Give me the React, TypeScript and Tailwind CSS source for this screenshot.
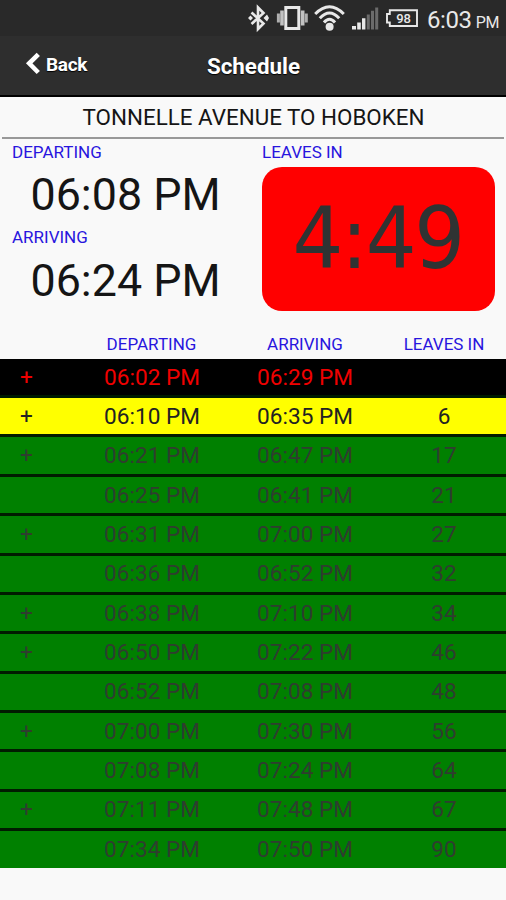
import { clsx } from "clsx";

type Train = {
  transfer: boolean;
  departing: string;
  arriving: string;
  leavesIn: string;
};

const trains: Train[] = [
  { transfer: true, departing: "06:02 PM", arriving: "06:29 PM", leavesIn: "" },
  { transfer: true, departing: "06:10 PM", arriving: "06:35 PM", leavesIn: "6" },
  { transfer: true, departing: "06:21 PM", arriving: "06:47 PM", leavesIn: "17" },
  { transfer: false, departing: "06:25 PM", arriving: "06:41 PM", leavesIn: "21" },
  { transfer: true, departing: "06:31 PM", arriving: "07:00 PM", leavesIn: "27" },
  { transfer: false, departing: "06:36 PM", arriving: "06:52 PM", leavesIn: "32" },
  { transfer: true, departing: "06:38 PM", arriving: "07:10 PM", leavesIn: "34" },
  { transfer: true, departing: "06:50 PM", arriving: "07:22 PM", leavesIn: "46" },
  { transfer: false, departing: "06:52 PM", arriving: "07:08 PM", leavesIn: "48" },
  { transfer: true, departing: "07:00 PM", arriving: "07:30 PM", leavesIn: "56" },
  { transfer: false, departing: "07:08 PM", arriving: "07:24 PM", leavesIn: "64" },
  { transfer: true, departing: "07:11 PM", arriving: "07:48 PM", leavesIn: "67" },
  { transfer: false, departing: "07:34 PM", arriving: "07:50 PM", leavesIn: "90" },
];

// missed = black, next one = yellow, the rest = green
const rowColor = (index: number) => {
  if (index === 0) return "bg-black text-[#f00000]";
  if (index === 1) return "bg-[#ffff00] text-[#222]";
  return "bg-[#008000] text-[#2f3d2f]";
};

const StatusBar = () => {
  return (
    <div className="flex h-9 items-center bg-[#292929] pl-[247px] text-[#e8e8e8]">
      {/* bluetooth */}
      <svg className="h-9 w-6 shrink-0" viewBox="0 0 24 36" fill="none" stroke="currentColor" strokeWidth="2.6">
        <path d="M4.5 12.5 L16.5 23.5 L11 29 V7.5 L16.5 13 L4.5 24" />
        <path d="M1 18 L3.5 15.5 L6 18 L3.5 20.5Z M16.5 18 L20 14.5 L22 18 L20 21.5Z" fill="currentColor" stroke="none" />
      </svg>
      {/* vibrate */}
      <svg className="ml-[5px] h-9 w-9 shrink-0" viewBox="0 0 36 36" fill="none" stroke="currentColor">
        <rect x="9.8" y="7.5" width="13" height="21" strokeWidth="3" />
        <path d="M6 10.5 V25.5 M26.7 10.5 V25.5" strokeWidth="3.6" opacity="0.8" />
        <path d="M2.4 13.5 V22.5 M30.3 13.5 V22.5" strokeWidth="3" opacity="0.7" />
      </svg>
      {/* wifi */}
      <svg className="h-9 w-9 shrink-0" viewBox="0 0 36 36" fill="none" stroke="currentColor" strokeWidth="3">
        <path d="M3.2 14 Q17.5 -0.5 31.8 14" />
        <path d="M7.8 18.2 Q17.5 7.8 27.2 18.2" />
        <path d="M12 22.5 Q17.5 16 23 22.5" />
        <circle cx="17.6" cy="26.7" r="4" fill="currentColor" stroke="none" />
      </svg>
      {/* signal */}
      <svg className="ml-[3px] h-9 w-[30px] shrink-0" viewBox="0 0 30 36" fill="currentColor">
        <path d="M1 26h4v3.5H1z M6.2 22.5h3.6v7H6.2z M11 18.3h3.4v11.2H11z" />
        <path d="M15.8 14.5h3v15h-3z M20 10.8h3v18.7h-3z M24.2 7.5h3v22h-3z" opacity="0.35" />
      </svg>
      <svg className="ml-[4px] h-9 w-9 shrink-0" viewBox="0 0 36 36" fill="none" stroke="currentColor">
        <path d="M4.8 10.2 H32 V26 H4.8 V22.5 H2 V14 H4.8Z" strokeWidth="1.9" />
        <text x="18.6" y="22.8" textAnchor="middle" fill="currentColor" stroke="none" className="font-[Roboto] text-[13px] font-medium">
          98
        </text>
      </svg>
      <span className="ml-[6px] mt-[6px] flex items-baseline whitespace-nowrap text-[24px] leading-9 tracking-[-0.4px]">
        6:03<span className="ml-[4px] text-[16px]">PM</span>
      </span>
    </div>
  );
};

const Header = () => {
  return (
    <header className="grid h-[61px] grid-cols-[1fr_auto_1fr] items-center border-b-2 border-black bg-[#2e2e2e] font-bold text-white [text-shadow:0_1px_1px_#000]">
      <div className="flex items-center gap-[5px] pb-[1px] pl-[25px] text-[19px] tracking-[-0.3px]">
        <svg className="mb-[3px] h-[23px] w-4" viewBox="0 0 16 23" fill="none" stroke="currentColor" strokeWidth="4.6">
          <path d="M13.3 2.3 L4.2 11.3 L13.3 20.5" />
        </svg>
        Back
      </div>
      <h1 className="pt-[3px] pl-px text-[22.4px]">Schedule</h1>
      <div />
    </header>
  );
};

const NextTrain = () => {
  return (
    <section className="flex h-[191px] pl-3">
      <div className="w-[250px]">
        <div className="h-[27px] text-[17px] leading-[27px] text-[#2815de]">DEPARTING</div>
        <div className="h-[58px] pl-[18.5px] text-[44.8px] leading-[58px]">06:08 PM</div>
        <div className="h-[27px] text-[17px] leading-[26px] text-[#2815de]">ARRIVING</div>
        <div className="h-[58px] pl-[18.5px] text-[44.8px] leading-[59px]">06:24 PM</div>
      </div>
      <div className="w-[233px]">
        <div className="h-[28px] text-[17px] leading-[27px] text-[#2815de]">LEAVES IN</div>
        <div className="flex h-[144px] items-center justify-center rounded-[20px] bg-[#ff0000] pr-[2px] pb-[2px] font-[family-name:'DejaVu_Sans'] text-[85px] leading-none text-[#2f3333]">
          <div className="scale-x-[0.94] tracking-[-2.4px]">4:49</div>
        </div>
      </div>
    </section>
  );
};

const columns = "grid grid-cols-[75px_153px_153px_125px] items-center text-center";

const App = () => {
  return (
    <main className="h-[900px] w-[506px] overflow-hidden bg-[#f9f9f9] font-[Roboto,sans-serif] text-[#151515]">
      <StatusBar />
      <Header />
      <h2 className="mx-[2px] h-[42px] border-b-2 border-[#999] pl-[1px] text-center text-[22.4px] leading-[41px]">
        TONNELLE AVENUE TO HOBOKEN
      </h2>
      <NextTrain />
      <div className={clsx(columns, "h-[28.8px] text-[17px] text-[#2815de]")}>
        <span />
        <span>DEPARTING</span>
        <span className="pl-px">ARRIVING</span>
        <span className="pl-px">LEAVES IN</span>
      </div>
      {trains.map((train, index) => (
        <div
          key={train.departing}
          className={clsx(
            columns,
            "pl-[0.5px] text-[22.6px] leading-none",
            index < trains.length - 1 ? "h-[39.35px] border-b-[3px] border-[#001c00] pt-[2px]" : "h-[37px] pt-px",
            rowColor(index)
          )}
        >
          <span className="pr-[23px]">{train.transfer && "+"}</span>
          <span>{train.departing}</span>
          <span>{train.arriving}</span>
          <span>{train.leavesIn}</span>
        </div>
      ))}
    </main>
  );
};

export default App;
